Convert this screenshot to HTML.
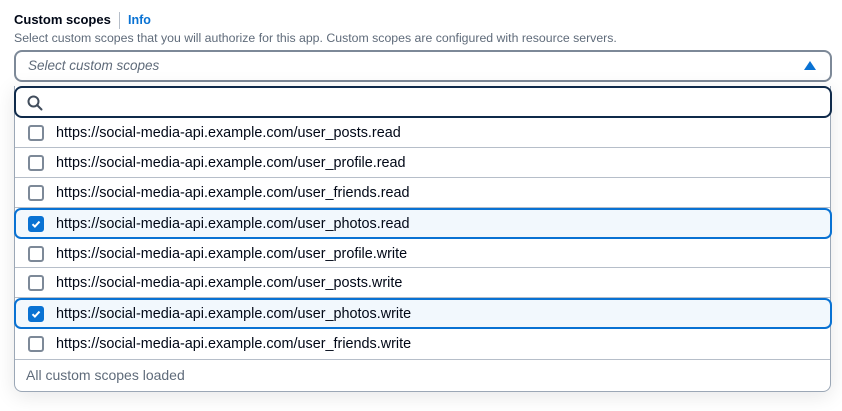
<!DOCTYPE html>
<html><head><style>
*{box-sizing:border-box;margin:0;padding:0}
body{width:842px;height:411px;background:#fff;font-family:"Liberation Sans",Arial,sans-serif;position:relative;overflow:hidden;color:#000716}
.a{position:absolute}
.lbl{left:14px;top:12px;font-size:13px;font-weight:bold;color:#000716}
.sep{left:119px;top:12px;width:1px;height:17px;background:#b6bec9}
.info{left:128px;top:13px;font-size:12.5px;font-weight:bold;color:#0972d3}
.desc{left:14px;top:31px;font-size:12.3px;color:#5f6b7a}
.sel{left:14px;top:50px;width:818px;height:32px;border:2px solid #7d8998;border-radius:8px}
.sel span{position:absolute;left:12px;top:6px;font-size:13.5px;font-style:italic;color:#5f6b7a}
.tri{left:804px;top:61px;width:0;height:0;border-left:6px solid transparent;border-right:6px solid transparent;border-bottom:9px solid #0972d3}
.box{left:14px;top:86px;width:817px;height:306px;border:1px solid #9ba7b6;border-top:none;border-radius:0 0 8px 8px;box-shadow:0 4px 20px rgba(0,7,22,.10)}
.srch{left:14px;top:86px;width:818px;height:32px;border:2px solid #0f2a4a;border-radius:8px;background:#fff}
.row{left:15px;width:815px;height:30px;border-bottom:1px solid #b6bec9;font-size:14.4px}
.row span{position:absolute;left:41px;top:7px}
.cb{position:absolute;left:13px;top:7px;width:16px;height:16px;border:2px solid #7d8998;border-radius:3px;background:#fff}
.on{left:14px;width:818px;height:31px;border:2px solid #0972d3;border-radius:7px;background:#f2f8fd;font-size:14.4px}
.on span{position:absolute;left:40px;top:6px}
.on .cb{left:12px;top:6px;background:#0972d3;border-color:#0972d3}
.foot{left:26px;top:367px;font-size:14px;color:#5f6b7a}
</style></head><body>
<div class="a lbl">Custom scopes</div><div class="a sep"></div><div class="a info">Info</div>
<div class="a desc">Select custom scopes that you will authorize for this app. Custom scopes are configured with resource servers.</div>
<div class="a sel"><span>Select custom scopes</span></div>
<div class="a tri"></div>
<div class="a box"></div>
<div class="a srch"><svg class="a" style="left:11px;top:7px" width="16" height="16" viewBox="0 0 16 16"><circle cx="6.5" cy="6.5" r="5" fill="none" stroke="#414d5c" stroke-width="2"/><path d="M10 10l4.5 4.5" stroke="#414d5c" stroke-width="2" stroke-linecap="round"/></svg></div>
<div class="a row" style="top:118px"><div class="cb"></div><span>https://social-media-api.example.com/user_posts.read</span></div>
<div class="a row" style="top:148px"><div class="cb"></div><span>https://social-media-api.example.com/user_profile.read</span></div>
<div class="a row" style="top:178px"><div class="cb"></div><span>https://social-media-api.example.com/user_friends.read</span></div>
<div class="a on" style="top:208px"><div class="cb"><svg width="12" height="12" viewBox="0 0 12 12" style="position:absolute;left:0;top:0"><path d="M2.5 6.2l2.4 2.4 4.6-5" fill="none" stroke="#fff" stroke-width="2"/></svg></div><span>https://social-media-api.example.com/user_photos.read</span></div>
<div class="a row" style="top:239px;height:29px"><div class="cb" style="top:7px"></div><span>https://social-media-api.example.com/user_profile.write</span></div>
<div class="a row" style="top:268px"><div class="cb"></div><span>https://social-media-api.example.com/user_posts.write</span></div>
<div class="a on" style="top:298px"><div class="cb"><svg width="12" height="12" viewBox="0 0 12 12" style="position:absolute;left:0;top:0"><path d="M2.5 6.2l2.4 2.4 4.6-5" fill="none" stroke="#fff" stroke-width="2"/></svg></div><span>https://social-media-api.example.com/user_photos.write</span></div>
<div class="a row" style="top:329px;height:31px"><div class="cb"></div><span>https://social-media-api.example.com/user_friends.write</span></div>
<div class="a foot">All custom scopes loaded</div>
</body></html>
